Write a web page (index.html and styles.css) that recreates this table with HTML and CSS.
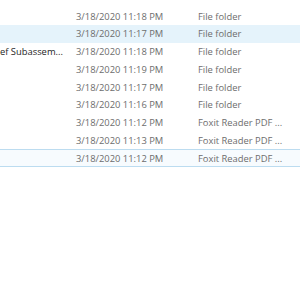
FILE: index.html
```html
<!DOCTYPE html>
<html lang="en">

<head>
    <meta charset="UTF-8">
    <title>Files</title>
    <link rel="stylesheet" href="styles.css">
</head>

<body>
    <div class="list">
        <div class="row">
            <span class="col-name"></span>
            <span class="col-date">3/18/2020 11:18 PM</span>
            <span class="col-type">File folder</span>
        </div>
        <div class="row hover">
            <span class="col-name"></span>
            <span class="col-date">3/18/2020 11:17 PM</span>
            <span class="col-type">File folder</span>
        </div>
        <div class="row">
            <span class="col-name">ef Subassem...</span>
            <span class="col-date">3/18/2020 11:18 PM</span>
            <span class="col-type">File folder</span>
        </div>
        <div class="row">
            <span class="col-name"></span>
            <span class="col-date">3/18/2020 11:19 PM</span>
            <span class="col-type">File folder</span>
        </div>
        <div class="row">
            <span class="col-name"></span>
            <span class="col-date">3/18/2020 11:17 PM</span>
            <span class="col-type">File folder</span>
        </div>
        <div class="row">
            <span class="col-name"></span>
            <span class="col-date">3/18/2020 11:16 PM</span>
            <span class="col-type">File folder</span>
        </div>
        <div class="row">
            <span class="col-name"></span>
            <span class="col-date">3/18/2020 11:12 PM</span>
            <span class="col-type">Foxit Reader PDF ...</span>
        </div>
        <div class="row">
            <span class="col-name"></span>
            <span class="col-date">3/18/2020 11:13 PM</span>
            <span class="col-type">Foxit Reader PDF ...</span>
        </div>
        <div class="row focus">
            <span class="col-name"></span>
            <span class="col-date">3/18/2020 11:12 PM</span>
            <span class="col-type">Foxit Reader PDF ...</span>
        </div>
    </div>
</body>

</html>
```

FILE: styles.css
```css
* {
    margin: 0;
    padding: 0;
    box-sizing: border-box;
}

body {
    width: 300px;
    height: 300px;
    overflow: hidden;
    background-color: #fff;
    font-family: "Open Sans", "Noto Sans", sans-serif;
    font-size: 9.4px;
    color: #6d6d6d;
}

.list {
    padding-top: 7.25px;
}

.row {
    height: 17.75px;
    display: flex;
    align-items: center;
    white-space: nowrap;
    border: 1px solid transparent;
    border-left: 0;
    border-right: 0;
}

.hover {
    background-color: #e5f3fb;
}

.focus {
    border-color: #bcdcf0;
    background-color: #f7fbfe;
}

.col-name {
    width: 76px;
    color: #1e1e1e;
    overflow: hidden;
}

.col-date {
    width: 122px;
}

.col-type {
    flex: 1;
}
```
